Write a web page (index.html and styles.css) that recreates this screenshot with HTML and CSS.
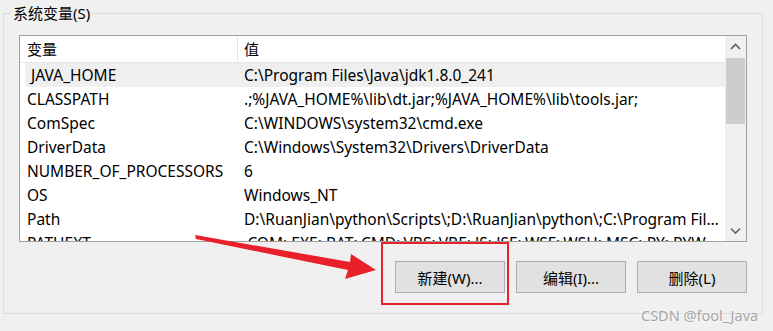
FILE: index.html
```html
<!DOCTYPE html>
<html lang="zh-CN">
<head>
    <meta charset="UTF-8">
    <title>系统变量</title>
    <link rel="stylesheet" href="styles.css">
</head>
<body>
    <div class="group">
        <span class="legend">系统变量(S)</span>
        <div class="list">
            <div class="table">
                <div class="head">
                    <div class="hcell name">变量</div>
                    <div class="hcell">值</div>
                </div>
                <div class="row selected"><span> JAVA_HOME</span><span>C:\Program Files\Java\jdk1.8.0_241</span></div>
                <div class="row"><span>CLASSPATH</span><span>.;%JAVA_HOME%\lib\dt.jar;%JAVA_HOME%\lib\tools.jar;</span></div>
                <div class="row"><span>ComSpec</span><span>C:\WINDOWS\system32\cmd.exe</span></div>
                <div class="row"><span>DriverData</span><span>C:\Windows\System32\Drivers\DriverData</span></div>
                <div class="row"><span>NUMBER_OF_PROCESSORS</span><span>6</span></div>
                <div class="row"><span>OS</span><span>Windows_NT</span></div>
                <div class="row"><span>Path</span><span>D:\RuanJian\python\Scripts\;D:\RuanJian\python\;C:\Program Files\Common Files\Oracle\Java\javapath</span></div>
                <div class="row"><span>PATHEXT</span><span>.COM;.EXE;.BAT;.CMD;.VBS;.VBE;.JS;.JSE;.WSF;.WSH;.MSC;.PY;.PYW</span></div>
            </div>
            <div class="scrollbar">
                <svg class="arrow" width="21" height="21" viewBox="0 0 21 21"><path d="M6 13 L10.5 8.5 L15 13" fill="none" stroke="#606060" stroke-width="1.6"/></svg>
                <div class="track"><div class="thumb"></div></div>
                <svg class="arrow" width="21" height="21" viewBox="0 0 21 21"><path d="M6 8.5 L10.5 13 L15 8.5" fill="none" stroke="#606060" stroke-width="1.6"/></svg>
            </div>
        </div>
        <div class="buttons">
            <button>新建(W)...</button>
            <button>编辑(I)...</button>
            <button>删除(L)</button>
        </div>
    </div>

    <svg class="mark" width="773" height="331" viewBox="0 0 773 331">
        <polygon points="195,235 350,262 351,254 376,270 345,279 348,270 196,239" fill="#e8202a"/>
        <rect x="382" y="243" width="126" height="61" fill="none" stroke="#e8202a" stroke-width="2"/>
    </svg>
    <div class="watermark">CSDN @fool_Java</div>
</body>
</html>
```

FILE: styles.css
```css
body {
    margin: 0;
    width: 773px;
    height: 331px;
    overflow: hidden;
    background: #f0f0f0;
    font-family: "Noto Sans", "Noto Sans CJK SC", sans-serif;
    font-size: 15px;
    color: #000;
    position: relative;
}
.group {
    position: relative;
    margin: 13px 0 0 3px;
    width: 760px;
    height: 301px;
    box-sizing: border-box;
    border: 1px solid #dcdcdc;
    padding: 21px 15px 0 15px;
}
.legend {
    position: absolute;
    top: -11px;
    left: 7px;
    padding: 0 2px;
    background: #f0f0f0;
    line-height: 20px;
}
.list {
    display: flex;
    height: 207px;
    box-sizing: border-box;
    border: 1px solid #a0a0a0;
    background: #fff;
    overflow: hidden;
}
.table {
    flex: 1;
    min-width: 0;
}
.head {
    display: flex;
    height: 27px;
    box-sizing: border-box;
    border-bottom: 1px solid #e5e5e5;
    line-height: 26px;
}
.hcell {
    padding-left: 6px;
}
.hcell.name {
    width: 210px;
    padding-left: 7px;
    border-right: 1px solid #e5e5e5;
}
.row {
    display: grid;
    grid-template-columns: 217px 1fr;
    height: 24px;
    line-height: 24px;
    margin-left: 5px;
    font-size: 15.5px;
}
.row span {
    padding-left: 2px;
    white-space: pre;
    overflow: hidden;
    text-overflow: ellipsis;
    padding-right: 3px;
}
.row.selected {
    background: #efefef;
}
.scrollbar {
    width: 21px;
    display: flex;
    flex-direction: column;
    background: #f0f0f0;
}
.arrow {
    display: block;
    flex: none;
}
.track {
    flex: 1;
    padding: 1px 1px 0 1px;
}
.thumb {
    height: 66px;
    background: #cdcdcd;
}
.buttons {
    display: flex;
    justify-content: flex-end;
    gap: 11px;
    margin-top: 19px;
}
button {
    width: 110px;
    height: 32px;
    font-family: inherit;
    font-size: 15px;
    background: #e1e1e1;
    border: 1px solid #adadad;
    padding: 0;
    color: #000;
}
.mark {
    position: absolute;
    left: 0;
    top: 0;
}
.watermark {
    position: absolute;
    left: 641px;
    top: 305px;
    font-size: 14.5px;
    color: #a6a6a6;
    text-shadow: 0 0 2px #fff;
}
```
